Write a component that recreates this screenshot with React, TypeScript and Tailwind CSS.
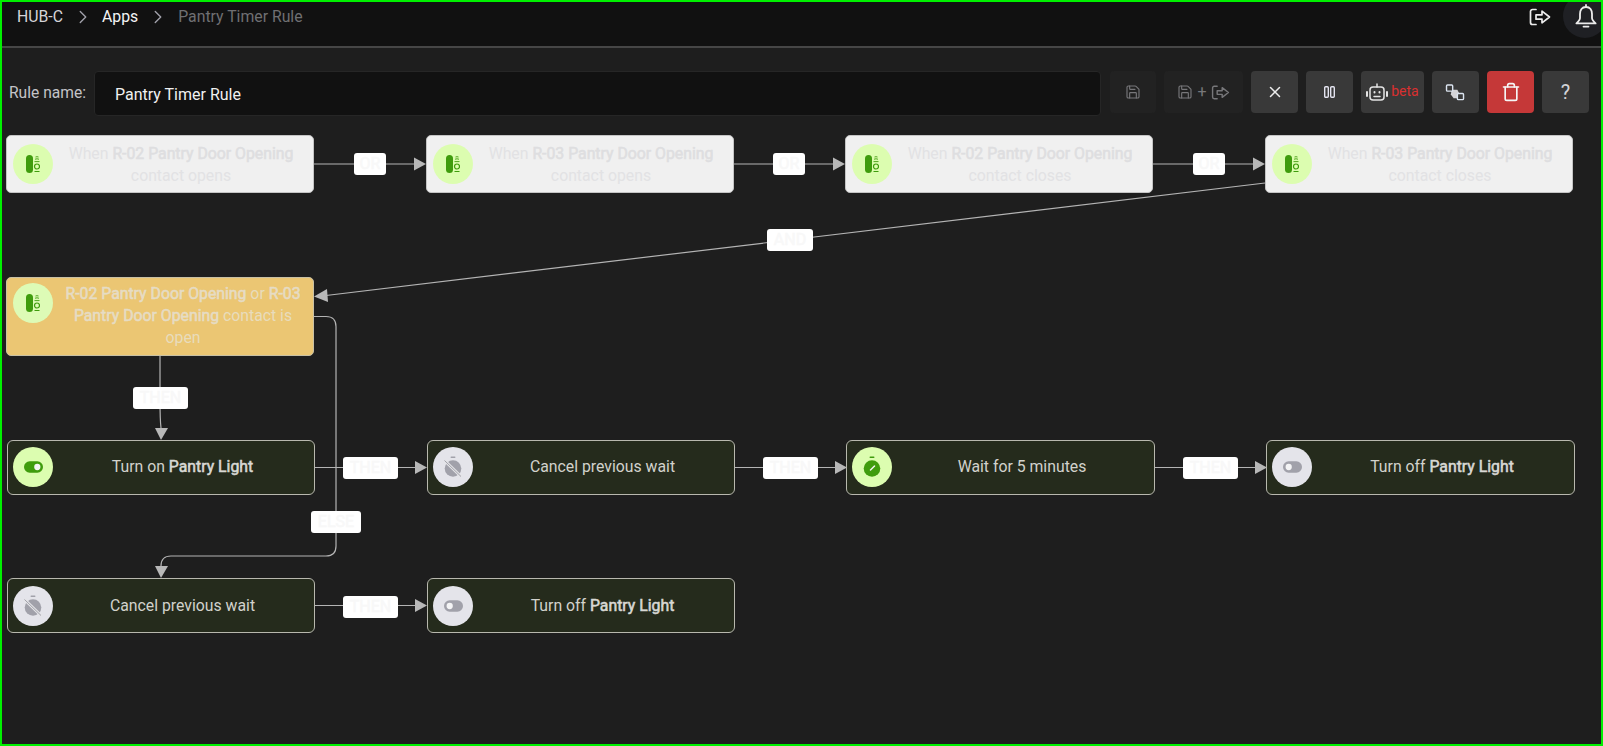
import React from 'react';
import { ChevronRight, Save, Trash, X } from 'lucide-react';

const font = 'font-["Roboto","Liberation_Sans",sans-serif]';
const fakeBold = '[-webkit-text-stroke:0.55px]';

const ExitIcon: React.FC<{ className?: string }> = ({ className = '' }) => (
  <svg viewBox="0 0 22 18" fill="none" stroke="currentColor" strokeWidth="1.7" strokeLinecap="round" strokeLinejoin="round" className={className}>
    <path d="M7 1.5H3.5A2 2 0 0 0 1.5 3.5v11a2 2 0 0 0 2 2H7" />
    <path d="M7 6.8h6V3.2L20.5 9 13 14.8v-3.6H7z" />
  </svg>
);

const BellIcon: React.FC<{ className?: string }> = ({ className = '' }) => (
  <svg viewBox="0 0 22 25" fill="none" stroke="currentColor" strokeWidth="1.8" strokeLinecap="round" strokeLinejoin="round" className={className}>
    <path d="M11 3C6.8 3 5 6.2 5 10v4c0 2-1.6 3.6-3.6 5.4h19.2C18.6 17.6 17 16 17 14v-4c0-3.800-1.800-7-6-7z" />
    <path d="M11 1v2M8.500 22.600h5" />
  </svg>
);

const SwapIcon: React.FC<{ className?: string }> = ({ className = '' }) => (
  <svg viewBox="0 0 22 18" className={className}>
    <path d="M7 6h6l2 4-1 5H9L6 11z" fill="#d4d4d8" />
    <rect x="1.500" y="1" width="6.500" height="6.500" rx="1" fill="#393939" stroke="#dbe4f0" strokeWidth="1.500" />
    <rect x="13" y="10" width="6.500" height="6.500" rx="1" fill="#393939" stroke="#dbe4f0" strokeWidth="1.500" />
  </svg>
);

const PauseIcon = () => (
  <svg viewBox="0 0 11 12" fill="none" stroke="#e4e4f0" strokeWidth="1.400" className="h-[12px] w-[11px]">
    <rect x="0.700" y="0.700" width="3.600" height="10.600" rx="1" />
    <rect x="6.700" y="0.700" width="3.600" height="10.600" rx="1" />
  </svg>
);

const RobotIcon = () => (
  <svg viewBox="0 0 22 18" fill="none" stroke="#e4e4e4" strokeWidth="1.500" strokeLinecap="round" className="h-[18px] w-[22px] shrink-0">
    <path d="M11 1v3" />
    <rect x="4" y="4" width="14" height="13" rx="3" />
    <path d="M1 9v4M21 9v4" strokeWidth="2" />
    <path d="M8.500 9v.5M13.500 9v.5" strokeWidth="2" />
    <path d="M8 13.500h6" />
  </svg>
);

const SensorIcon = () => (
  <svg viewBox="0 0 14 18" className="h-[18px] w-[14px] text-[#3f9c0d]">
    <rect x="0" y="0" width="7" height="18" rx="3.500" fill="currentColor" />
    <circle cx="11" cy="11.500" r="2.500" fill="none" stroke="currentColor" strokeWidth="1.200" />
    <path d="M8.500 6.600h5M9 4.300c1.200-.6 2.800-.6 4 0M9.500 2c.8-.4 2.200-.4 3 0" fill="none" stroke="currentColor" strokeWidth="0.900" />
    <path d="M8.500 16.500h5" stroke="currentColor" strokeWidth="1" />
  </svg>
);

const ToggleIcon: React.FC<{ on?: boolean }> = ({ on = false }) => (
  <svg viewBox="0 0 20 12" className="h-[12px] w-[19px]">
    <rect width="20" height="12" rx="6" fill={on ? '#3f9c0d' : '#a1a1aa'} />
    <circle cx={on ? 14 : 6} cy="6" r="3.300" fill="#f4f4f5" />
  </svg>
);

const TimerIcon: React.FC<{ off?: boolean }> = ({ off = false }) => (
  <svg viewBox="0 0 20 22" className={`h-[22px] w-[20px] ${off ? 'text-[#a1a1aa]' : 'text-[#3f9c0d]'}`}>
    <rect x="7.500" y="0.500" width="5" height="1.600" rx="0.800" fill="currentColor" />
    <circle cx="10" cy="12.500" r="8.300" fill="currentColor" />
    {off ? (
      <path d="M1.500 4.500 18 20.500" stroke="#e4e4e7" strokeWidth="3" />
    ) : (
      <path d="M8.500 14 12.500 10" stroke="#f4f4f5" strokeWidth="1.500" strokeLinecap="round" />
    )}
    {off && <path d="M1.500 4.500 18 20.500" stroke="#a1a1aa" strokeWidth="1" />}
  </svg>
);

const IconCircle: React.FC<{ color: string; children: React.ReactNode }> = ({ color, children }) => (
  <div className={`flex h-[40px] w-[40px] shrink-0 items-center justify-center rounded-full ${color}`}>
    {children}
  </div>
);

const lime = 'bg-[#dcfdb0]';
const grey = 'bg-[#e4e4ea]';

const triggers = [
  { pos: 'left-[4px]', name: 'R-02 Pantry Door Opening', action: 'contact opens' },
  { pos: 'left-[424px]', name: 'R-03 Pantry Door Opening', action: 'contact opens' },
  { pos: 'left-[843px]', name: 'R-02 Pantry Door Opening', action: 'contact closes' },
  { pos: 'left-[1263px]', name: 'R-03 Pantry Door Opening', action: 'contact closes' },
];

const actions = [
  { pos: 'left-[5px] top-[320px] w-[308px] pb-[1px]', icon: <IconCircle color={lime}><ToggleIcon on /></IconCircle>, text: 'Turn on ', bold: 'Pantry Light' },
  { pos: 'left-[425px] top-[320px] w-[308px] pb-[1px]', icon: <IconCircle color={grey}><TimerIcon off /></IconCircle>, text: 'Cancel previous wait', bold: '' },
  { pos: 'left-[844px] top-[320px] w-[309px] pb-[1px]', icon: <IconCircle color={lime}><TimerIcon /></IconCircle>, text: 'Wait for 5 minutes', bold: '' },
  { pos: 'left-[1264px] top-[320px] w-[309px] pb-[1px]', icon: <IconCircle color={grey}><ToggleIcon /></IconCircle>, text: 'Turn off ', bold: 'Pantry Light' },
  { pos: 'left-[5px] top-[458px] w-[308px]', icon: <IconCircle color={grey}><TimerIcon off /></IconCircle>, text: 'Cancel previous wait', bold: '' },
  { pos: 'left-[425px] top-[458px] w-[308px]', icon: <IconCircle color={grey}><ToggleIcon /></IconCircle>, text: 'Turn off ', bold: 'Pantry Light' },
];

const labels = [
  { pos: 'left-[352px] top-[33px] w-[32px]', text: 'OR' },
  { pos: 'left-[771px] top-[33px] w-[32px]', text: 'OR' },
  { pos: 'left-[1191px] top-[33px] w-[32px]', text: 'OR' },
  { pos: 'left-[765px] top-[109px] w-[46px]', text: 'AND' },
  { pos: 'left-[131px] top-[267px] w-[55px]', text: 'THEN' },
  { pos: 'left-[341px] top-[337px] w-[55px]', text: 'THEN' },
  { pos: 'left-[761px] top-[337px] w-[55px]', text: 'THEN' },
  { pos: 'left-[1181px] top-[337px] w-[55px]', text: 'THEN' },
  { pos: 'left-[309px] top-[391px] w-[50px]', text: 'ELSE' },
  { pos: 'left-[341px] top-[476px] w-[55px]', text: 'THEN' },
];

// edges in page coordinates, the viewBox lines them up with the canvas
const edgePaths = [
  'M314 164H414',
  'M733 164H833',
  'M1153 164H1253',
  'M1265 183 326 295.500',
  'M160 356V400Q160 420 161 428',
  'M315 467.500H415',
  'M735 467.500H835',
  'M1155 467.500H1255',
  'M314 316.500H326Q336 316.500 336 326.500V546Q336 556 326 556H171Q161 556 161 566',
  'M315 605.500H415',
];

const arrows = [
  '1265,164 1253,157.500 1253,170.500',
  '426,164 414,157.500 414,170.500',
  '845,164 833,157.500 833,170.500',
  '314,296.500 327,289 328,302',
  '161,440 155,428 168,428',
  '427,467.500 415,461 415,474',
  '847,467.500 835,461 835,474',
  '1267,467.500 1255,461 1255,474',
  '161,578 155,566 168,566',
  '427,605.500 415,599 415,612',
];

const ToolButton: React.FC<{ className?: string; children: React.ReactNode }> = ({ className = 'w-[47px] bg-[#393939]', children }) => (
  <div className={`flex h-[42px] items-center justify-center rounded-[4px] ${className}`}>{children}</div>
);

export default function App() {
  return (
    <div className={`flex h-[746px] w-[1603px] flex-col overflow-hidden border-2 border-[#00f000] bg-[#1e1e1e] ${font}`}>
      <header className="relative flex h-[46px] shrink-0 items-start overflow-hidden border-b-2 border-[#464646] bg-[#111111] pl-[15px] pt-[3px] text-[15.8px]">
        <span className="text-[#d4d4d8]">HUB-C</span>
        <ChevronRight className="ml-[9px] mr-[8px] mt-[1px] h-[22px] w-[22px] text-[#a1a1aa]" strokeWidth={1.5} />
        <span className="text-[#f4f4f5]">Apps</span>
        <ChevronRight className="mx-[9px] mt-[1px] h-[22px] w-[22px] text-[#a1a1aa]" strokeWidth={1.5} />
        <span className="text-[#6f6f72]">Pantry Timer Rule</span>
        <ExitIcon className="absolute left-[1527px] top-[6px] h-[18px] w-[22px] text-[#ececec]" />
        <div className="absolute left-[1561px] top-[-8px] flex h-[44px] w-[44px] items-start rounded-full bg-[#1f2024] pl-[12px] pt-[10px]">
          <BellIcon className="h-[25px] w-[22px] shrink-0 text-[#ececec]" />
        </div>
      </header>

      <div className="flex h-[72px] shrink-0 items-start pl-[7px] pt-[23px]">
        <span className="mt-[11px] w-[85px] shrink-0 text-[15.6px] text-[#c4c4c8]">Rule name:</span>
        <div className="flex h-[45px] w-[1007px] shrink-0 items-center rounded-[4px] border border-[#262626] bg-[#111111] pl-[20px] pt-[2px] text-base text-[#f0f0f0]">
          Pantry Timer Rule
        </div>
        <div className="ml-[9px] flex items-center gap-[8px]">
          <ToolButton className="w-[46px] bg-[#222222]">
            <Save className="h-[16px] w-[16px] text-[#77777a]" strokeWidth={1.700} />
          </ToolButton>
          <ToolButton className="w-[79px] gap-[4px] bg-[#222222] text-[#77777a]">
            <Save className="h-[16px] w-[16px]" strokeWidth={1.700} />
            <span className="text-base leading-none">+</span>
            <ExitIcon className="h-[15px] w-[19px]" />
          </ToolButton>
          <ToolButton>
            <X className="h-[18px] w-[18px] text-[#ececec]" strokeWidth={2} />
          </ToolButton>
          <ToolButton>
            <PauseIcon />
          </ToolButton>
          <ToolButton className="w-[63px] gap-[3px] bg-[#393939]">
            <RobotIcon />
            <span className="mb-[2px] text-[14px] text-[#d93030]">beta</span>
          </ToolButton>
          <ToolButton>
            <SwapIcon className="h-[17px] w-[21px]" />
          </ToolButton>
          <ToolButton className="w-[47px] bg-[#c53838]">
            <Trash className="h-[20px] w-[20px] text-[#f5f5f5]" strokeWidth={2} />
          </ToolButton>
          <ToolButton>
            <span className="text-[20px] text-[#d4d4d8]">?</span>
          </ToolButton>
        </div>
      </div>

      <main className="relative min-h-0 flex-1">
        <svg viewBox="2 120 1599 622" width={1599} height={622} className="absolute left-0 top-0" fill="none">
          {edgePaths.map((d) => (
            <path key={d} d={d} stroke="#b4b4b4" strokeWidth="1.200" />
          ))}
          {arrows.map((points) => (
            <polygon key={points} points={points} fill="#b8b8b8" />
          ))}
        </svg>

        {triggers.map((node) => (
          <div
            key={node.pos}
            className={`absolute top-[15px] flex h-[58px] w-[308px] items-center rounded-[5px] border border-[#c4c4c4] bg-[#f0f0f0] pl-[6px] ${node.pos}`}
          >
            <IconCircle color={lime}><SensorIcon /></IconCircle>
            <div className="flex-1 pr-[4px] pt-[2px] text-center text-[15.8px] leading-[22px] text-[#e2e2e4]">
              When <b className={`font-normal text-[#dedee0] ${fakeBold}`}>{node.name}</b>
              <br />
              {node.action}
            </div>
          </div>
        ))}

        <div className="absolute left-[4px] top-[157px] flex h-[79px] w-[308px] items-start rounded-[5px] border border-[#c8c0a4] bg-[#ebc673] pl-[6px] pt-[5px]">
          <IconCircle color="bg-[#ddfbb6]"><SensorIcon /></IconCircle>
          <div className="flex-1 px-[10px] text-center text-[15.8px] leading-[22px] text-[#e8dcbc]">
            <b className={`font-normal text-[#e6dcc4] ${fakeBold}`}>R-02 Pantry Door Opening</b> or <b className={`font-normal text-[#e6dcc4] ${fakeBold}`}>R-03 Pantry Door Opening</b> contact is open
          </div>
        </div>

        {actions.map((node) => (
          <div
            key={node.pos}
            className={`absolute flex h-[55px] items-center rounded-[6px] border border-[#b8b8ae] bg-[#252b1c] pl-[5px] ${node.pos}`}
          >
            {node.icon}
            <div className="flex-1 pr-[2px] text-center text-[15.8px] text-[#d2d2cc]">
              {node.text}
              {node.bold && <b className={`font-normal text-[#d8d8d4] ${fakeBold}`}>{node.bold}</b>}
            </div>
          </div>
        ))}

        {labels.map((label) => (
          <div
            key={label.pos}
            className={`absolute flex h-[22px] items-center justify-center rounded-[3px] bg-white text-base text-[#f8f8f8] ${fakeBold} ${label.pos}`}
          >
            {label.text}
          </div>
        ))}
      </main>
    </div>
  );
}
